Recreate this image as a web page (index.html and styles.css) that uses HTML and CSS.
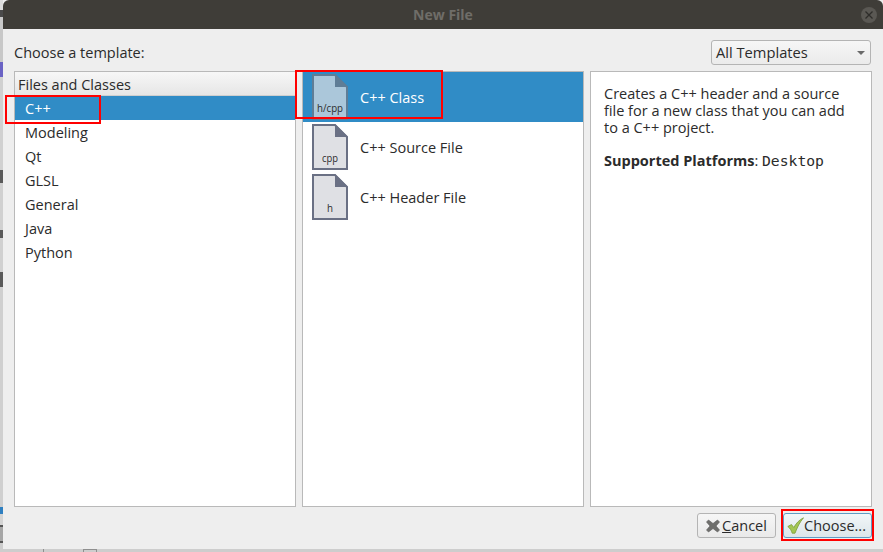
FILE: index.html
```html
<!DOCTYPE html>
<html lang="en">
<head>
<meta charset="utf-8">
<title>New File</title>
<link rel="stylesheet" href="styles.css">
</head>
<body>
<div class="screen">
  <i class="behind behind-line"></i>
  <i class="behind behind-folder"></i>
  <div class="dialog">
    <header class="titlebar">
      <span class="title">New File</span>
      <span class="close"><svg width="10" height="10" viewBox="0 0 10 10"><path d="M1.5 1.5l7 7M8.5 1.5l-7 7" stroke="#2e2d2a" stroke-width="1.3" fill="none"/></svg></span>
    </header>
    <main class="content">
      <div class="toprow">
        <span class="choose">Choose a template:</span>
        <div class="combo"><span class="combo-text">All Templates</span><span class="arrow"></span></div>
      </div>
      <div class="panels">
        <section class="panel">
          <div class="head">Files and Classes</div>
          <ul class="cats">
            <li class="sel">C++</li><li>Modeling</li><li>Qt</li><li>GLSL</li><li>General</li><li>Java</li><li>Python</li>
          </ul>
        </section>
        <section class="panel">
          <div class="tpl sel">
            <svg class="doc" width="36" height="46" viewBox="0 0 36 46"><path d="M1 1H23L35 13V45H1Z" fill="#abc7da" stroke="#5f7d96" stroke-width="2"/><path d="M23 0L36 13H23Z" fill="#5f7d96"/><text x="18" y="38" text-anchor="middle" textLength="26" lengthAdjust="spacingAndGlyphs" class="doctext">h/cpp</text></svg>
            <span>C++ Class</span>
          </div>
          <div class="tpl">
            <svg class="doc" width="36" height="46" viewBox="0 0 36 46"><path d="M1 1H23L35 13V45H1Z" fill="#dfe0e4" stroke="#6a7084" stroke-width="2"/><path d="M23 0L36 13H23Z" fill="#6a7084"/><text x="18" y="38" text-anchor="middle" textLength="16" lengthAdjust="spacingAndGlyphs" class="doctext">cpp</text></svg>
            <span>C++ Source File</span>
          </div>
          <div class="tpl">
            <svg class="doc" width="36" height="46" viewBox="0 0 36 46"><path d="M1 1H23L35 13V45H1Z" fill="#dfe0e4" stroke="#6a7084" stroke-width="2"/><path d="M23 0L36 13H23Z" fill="#6a7084"/><text x="18" y="38" text-anchor="middle" textLength="6" lengthAdjust="spacingAndGlyphs" class="doctext">h</text></svg>
            <span>C++ Header File</span>
          </div>
        </section>
        <section class="panel desc">
          <p>Creates a C++ header and a source file for a new class that you can add to a C++ project.</p>
          <p class="plat"><b>Supported Platforms</b>: <span class="mono">Desktop</span></p>
        </section>
      </div>
      <div class="buttons">
        <button class="btn"><svg width="14" height="14" viewBox="0 0 14 14"><path d="M2.500 1L7 4.500L11.500 1L13.500 3L10 7L13.500 11L11.500 13L7 9.500L2.500 13L.5 11L4 7L.5 3Z" fill="#6f6f6d" stroke="#5a5a5a" stroke-width=".6"/></svg><span><u>C</u>ancel</span></button>
        <button class="btn default"><svg width="17" height="17" viewBox="0 0 17 17"><path d="M.8 9.500L4.500 7.500L6.800 10.500C9 6.500 12 3 16.500 .8C12.800 5 10.200 10.500 8 16.200H5.200C4.500 13.500 3 11.200 .8 9.500Z" fill="#a3c653" stroke="#7b9c38" stroke-width=".8"/></svg><span>Choose...</span></button>
      </div>
    </main>
  </div>
  <i class="mark mark-a"></i>
  <i class="mark mark-b"></i>
  <i class="mark mark-c"></i>
</div>
</body>
</html>
```
FILE: styles.css
```css
* { box-sizing: border-box; }
html, body { margin: 0; padding: 0; }
body { width: 883px; height: 552px; overflow: hidden; font-family: "Open Sans", "Noto Sans", sans-serif; font-size: 14px; color: #2b2b2b; }
.screen {
  position: relative; width: 883px; height: 552px; padding: 0 0 3px 3px;
  background: linear-gradient(#dcdcdc 0 10px, #4a4a4a 10px 17px, #c8c8c8 17px 62px, #6a63c4 62px 77px, #d0d0d0 77px 170px, #5a5a5a 170px 183px, #d0d0d0 183px 230px, #5a5a5a 230px 238px, #d0d0d0 238px 272px, #5a5a5a 272px 287px, #cfcfcf 287px 507px, #2f7fc0 507px 514px, #d4d4d4 514px 525px, #555 525px 527px, #a6a6a6 527px 541px, #555 541px 543px, #cdcdcd 543px);
}
.behind { position: absolute; display: block; }
.behind-line { left: 43px; top: 549px; width: 1px; height: 3px; background: #8f8f8f; }
.behind-folder { left: 83px; top: 549px; width: 14px; height: 3px; border: 1px solid #8f8f8f; border-bottom: 0; }
.dialog { height: 549px; display: flex; flex-direction: column; background: #eeeeee; position: relative; }
.titlebar { height: 29px; flex: none; background: #3f3d38; border-radius: 6px 6px 0 0; display: flex; align-items: center; justify-content: center; position: relative; }
.title { font-weight: 700; font-size: 14px; color: #6f6d68; margin-top: -1px; }
.close { position: absolute; right: 6px; top: 7px; width: 16px; height: 16px; border-radius: 50%; background: #5a5853; display: flex; align-items: center; justify-content: center; }
.content { flex: 1; display: flex; flex-direction: column; padding: 11px 11px 9px 11px; min-height: 0; }
.toprow { display: flex; justify-content: space-between; align-items: center; height: 25px; margin-bottom: 6px; padding-right: 1px; }
.choose { font-size: 14.500px; }
.combo { width: 160px; height: 25px; border: 1px solid #b4b4b4; border-radius: 3px; background: linear-gradient(#f6f6f6, #ebebeb); display: flex; align-items: center; justify-content: space-between; padding: 0 5px 0 4px; font-size: 14.700px; }
.combo-text { margin-top: -2px; }
.arrow { width: 0; height: 0; border-left: 4px solid transparent; border-right: 4px solid transparent; border-top: 4px solid #6a6a6a; }
.panels { display: grid; grid-template-columns: 282px 282px 282px; gap: 6px; height: 436px; flex: none; }
.panel { background: #fff; border: 1px solid #b9b9b9; overflow: hidden; }
.head { height: 24px; padding-left: 3px; line-height: 25px; font-size: 14.500px; background: linear-gradient(#f7f7f7, #e6e6e6); border-bottom: 1px solid #cfcfcf; }
.cats { list-style: none; margin: 0; padding: 0; }
.cats li { height: 24px; line-height: 26px; padding-left: 10px; font-size: 14.500px; }
.cats li.sel { background: #308cc6; color: #fff; }
.tpl { height: 50px; display: flex; align-items: center; gap: 12px; padding-left: 9px; font-size: 14.500px; }
.tpl.sel { background: #308cc6; color: #fff; }
.doc { flex: none; overflow: visible; }
.doctext { font-size: 11.500px; fill: #2b2b2b; font-family: "Open Sans", sans-serif; }
.desc { padding: 13px 13px; font-size: 14.500px; line-height: 17px; }
.desc p { margin: 0; }
.desc .plat { margin-top: 16px; }
.mono { font-family: "DejaVu Sans Mono", monospace; font-size: 14.700px; }
.buttons { display: flex; justify-content: flex-end; gap: 7px; margin-top: 6px; height: 25px; }
.btn { height: 25px; width: 79px; border: 1px solid #b4b4b4; border-radius: 3px; background: linear-gradient(#f6f6f6, #e9e9e9); display: flex; align-items: center; justify-content: center; gap: 2px; font: inherit; font-size: 14.500px; color: #2b2b2b; padding: 0 3px; }
.btn.default { width: 89px; justify-content: flex-start; gap: 0; border-color: #5f9cc4; background: linear-gradient(#f2f6f8, #dce6ea); }
.mark { position: absolute; border: 2px solid #f00; }
.mark-a { left: 5px; top: 95px; width: 96px; height: 29px; }
.mark-b { left: 295px; top: 70px; width: 148px; height: 49px; }
.mark-c { left: 781px; top: 509px; width: 93px; height: 32px; }
```
